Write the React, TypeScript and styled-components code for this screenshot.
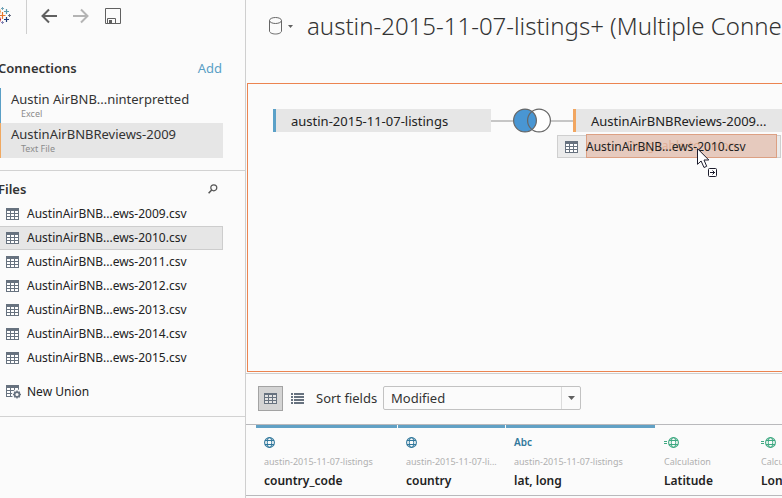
import React from "react";
import styled, { createGlobalStyle } from "styled-components";

const Global = createGlobalStyle`
  * { box-sizing: border-box; }
  body {
    margin: 0;
    background: #fbfbfb;
    color: #333;
    font-family: "Noto Sans", "Liberation Sans", sans-serif;
    font-size: 13px;
  }
  button, select, input { font: inherit; color: inherit; }
  button { border: 0; padding: 0; background: none; text-align: left; }
  h1, h2, p, ul { margin: 0; padding: 0; }
  ul { list-style: none; }
  svg { display: block; flex: none; }
`;

const Page = styled.div`
  display: grid;
  grid-template-columns: 246px minmax(0, 1fr);
  min-height: 100vh;
`;

const Sidebar = styled.aside`
  border-right: 1px solid #cfcfcf;
`;

const Toolbar = styled.div`
  display: flex;
  height: 56px;
`;

const Brand = styled.div`
  width: 27px;
  height: 34px;
  padding-top: 6px;
  border-right: 1px solid #cfcfcf;
`;

const ToolButtons = styled.div`
  display: flex;
  gap: 16px;
  padding: 8px 0 0 14px;
  height: 24px;
`;

const SectionHead = styled.div<{ $pad: number }>`
  display: flex;
  align-items: center;
  justify-content: space-between;
  height: 24px;
  padding-right: ${(p) => p.$pad}px;
`;

const SectionTitle = styled.h2`
  font-size: 13px;
  font-weight: 600;
  line-height: 24px;
  margin-left: -2px;
`;

const AddLink = styled.a`
  color: #5a9fc6;
  font-size: 13px;
  text-decoration: none;
`;

const Connections = styled.section`
  padding-bottom: 12px;
  border-bottom: 1px solid #d2d2d2;
`;

const ConnectionList = styled.ul`
  padding: 8px 22px 0 0;
`;

const Connection = styled.button<{ $accent: string; $selected?: boolean }>`
  display: flex;
  flex-direction: column;
  width: 100%;
  height: 35px;
  padding: 2px 0 0 10px;
  border-left: 1px solid ${(p) => p.$accent};
  background: ${(p) => (p.$selected ? "#e6e6e6" : "transparent")};
`;

const ConnectionName = styled.span`
  line-height: 18px;
  font-size: 13px;
  white-space: nowrap;
`;

const ConnectionKind = styled.span`
  padding-left: 10px;
  color: #8c8c8c;
  font-size: 9px;
  line-height: 12px;
`;

const Files = styled.section`
  padding: 6px 0 12px;
  border-bottom: 1px solid #d2d2d2;
`;

const FileList = styled.ul`
  padding: 1px 22px 10px 0;
`;

const FileRow = styled.button<{ $selected?: boolean }>`
  display: flex;
  align-items: center;
  gap: 8px;
  width: 100%;
  height: 24px;
  padding: 0 0 1px 6px;
  border: 1px solid ${(p) => (p.$selected ? "#cdcdcd" : "transparent")};
  border-left: 0;
  background: ${(p) => (p.$selected ? "#e6e6e6" : "transparent")};
  color: #222;
  font-size: 12px;
  white-space: nowrap;
`;

const UnionRow = styled(FileRow)`
  gap: 6px;
`;

const Main = styled.main`
  display: flex;
  flex-direction: column;
  min-width: 0;
`;

const Header = styled.header`
  display: flex;
  align-items: center;
  height: 83px;
  padding: 0 0 31px 22px;
  overflow: hidden;
`;

const SourceMenu = styled.button`
  display: flex;
  flex: none;
  align-items: center;
  gap: 5px;
  width: 39px;
`;

const Title = styled.h1`
  flex: none;
  font-size: 24px;
  font-weight: 300;
  line-height: 36px;
  white-space: nowrap;
`;

const Canvas = styled.section`
  position: relative;
  height: 289px;
  margin: 0 0 1px 1px;
  padding: 24px 0 0 25px;
  border: 1px solid #ec8450;
  border-right: 0;
  overflow: hidden;
`;

const JoinRow = styled.div`
  display: flex;
  align-items: center;
  height: 25px;
`;

const TableNode = styled.button<{ $accent: string }>`
  flex: none;
  width: 218px;
  height: 23px;
  padding-left: 15px;
  border-left: 3px solid ${(p) => p.$accent};
  background: #e6e6e6;
  color: #222;
  font-size: 13px;
  white-space: nowrap;
`;

const Wire = styled.span`
  flex: none;
  width: 22px;
  height: 2px;
  background: #c6c6c6;
`;

const DragGhost = styled.div`
  position: absolute;
  top: 51px;
  left: 309px;
  display: flex;
  align-items: center;
  gap: 8px;
  width: 224px;
  height: 23px;
  padding-left: 7px;
  border: 1px solid #cfcfcf;
  background: #ebebeb;
  color: #222;
  font-size: 12px;
  white-space: nowrap;
`;

const GhostName = styled.span`
  position: relative;
`;

const DropTarget = styled.div`
  position: absolute;
  top: -2px;
  left: 28px;
  width: 191px;
  height: 24px;
  border: 1px solid #dca083;
  background: #e6cabe;
  color: #e0af96;
  font-size: 12px;
  line-height: 22px;
  text-align: center;
`;

const Pointer = styled.div`
  position: absolute;
  top: 64px;
  left: 449px;
`;

const SortBar = styled.div`
  display: flex;
  align-items: center;
  height: 52px;
  padding: 0 0 2px 12px;
  border-top: 1px solid #cfcfcf;
  border-bottom: 1px solid #b9b9bc;
`;

const ViewButton = styled.button<{ $active?: boolean }>`
  display: flex;
  align-items: center;
  justify-content: center;
  width: 25px;
  height: 25px;
  margin-right: 2px;
  border: 1px solid ${(p) => (p.$active ? "#a3a3a3" : "transparent")};
  background: ${(p) => (p.$active ? "#d4d4d4" : "transparent")};
`;

const SortLabel = styled.label`
  width: 67px;
  margin-left: 4px;
  font-size: 13px;
  white-space: nowrap;
`;

const SelectWrap = styled.div`
  display: grid;
  grid-template-columns: 1fr 19px;
  width: 198px;
  height: 24px;
  border: 1px solid #c2c2c2;
  border-radius: 2px;
`;

const SortSelect = styled.select`
  grid-area: 1 / 1 / 2 / 3;
  appearance: none;
  padding: 0 26px 0 7px;
  border: 0;
  background: transparent;
  font-size: 13px;
`;

const SelectArrow = styled.span`
  grid-area: 1 / 2 / 2 / 3;
  display: flex;
  align-items: center;
  justify-content: center;
  border-left: 1px solid #dcdcdc;
  pointer-events: none;
`;

const FieldStrip = styled.div`
  overflow: hidden;
  border-bottom: 1px solid #b9b9bc;
`;

const FieldTable = styled.table`
  margin-left: 10px;
  width: 624px;
  table-layout: fixed;
  border-collapse: collapse;
`;

const Field = styled.th<{ $w: number }>`
  width: ${(p) => p.$w}px;
  padding: 0 1px 0 0;
  vertical-align: top;
  text-align: left;
  font-weight: 400;
`;

const FieldBody = styled.div<{ $linked?: boolean }>`
  height: 70px;
  padding: 8px 8px 0;
  border-top: 3px solid ${(p) => (p.$linked ? "#61a1c5" : "transparent")};
`;

const TypeIcon = styled.div`
  display: flex;
  align-items: center;
  height: 12px;
  color: #31789c;
  font-size: 10px;
  font-weight: 600;
`;

const FieldSource = styled.p`
  margin-top: 6px;
  color: #b0b0b0;
  font-size: 9px;
  line-height: 16px;
  overflow: hidden;
  text-overflow: ellipsis;
  white-space: nowrap;
`;

const FieldName = styled.p`
  margin-top: 1px;
  color: #222;
  font-size: 12px;
  font-weight: 600;
  line-height: 20px;
  white-space: nowrap;
`;

const TableIcon = () => (
  <svg width="13" height="12" viewBox="0 0 13 12" aria-hidden="true" shapeRendering="crispEdges">
    <path fill="#67727f" d="M0 0h13v12H0z" />
    <path
      fill="#fff"
      d="M1 3h3v2H1zM5 3h3v2H5zM9 3h3v2H9zM1 6h3v2H1zM5 6h3v2H5zM9 6h3v2H9zM1 9h3v2H1zM5 9h3v2H5zM9 9h3v2H9z"
    />
  </svg>
);

const GridIcon = () => (
  <svg width="13" height="11" viewBox="0 0 13 11" aria-hidden="true" shapeRendering="crispEdges">
    <path fill="#67727f" d="M0 0h13v11H0z" />
    <path
      fill="#e4e4e4"
      d="M1 2h3v2H1zM5 2h3v2H5zM9 2h3v2H9zM1 5h3v2H1zM5 5h3v2H5zM9 5h3v2H9zM1 8h3v2H1zM5 8h3v2H5zM9 8h3v2H9z"
    />
  </svg>
);

const ListIcon = () => (
  <svg width="13" height="11" viewBox="0 0 13 11" aria-hidden="true" shapeRendering="crispEdges">
    <path
      fill="#67727f"
      d="M0 0h2v2H0zM3 0h10v2H3zM0 3h2v2H0zM3 3h10v2H3zM0 6h2v2H0zM3 6h10v2H3zM0 9h2v2H0zM3 9h10v2H3z"
    />
  </svg>
);

const UnionIcon = () => (
  <svg width="15" height="14" viewBox="0 0 15 14" aria-hidden="true">
    <path fill="#67727f" d="M0 0h13v12H0z" shapeRendering="crispEdges" />
    <path
      fill="#fff"
      shapeRendering="crispEdges"
      d="M1 3h3v2H1zM5 3h3v2H5zM9 3h3v2H9zM1 6h3v2H1zM5 6h3v2H5zM1 9h3v2H1zM5 9h2v2H5z"
    />
    <circle cx="11" cy="9.5" r="5" fill="#fbfbfb" />
    <circle cx="11" cy="9.5" r="2.4" fill="none" stroke="#67727f" strokeWidth="1.6" />
    <path
      stroke="#67727f"
      strokeWidth="1.3"
      d="M11 5.5v2M11 11.5v2M7 9.5h2M13 9.5h2M8.2 6.7l1.3 1.3M12.5 11l1.3 1.3M8.2 12.3L9.5 11M12.5 8l1.3-1.3"
    />
  </svg>
);

const Globe = ({ color }: { color: string }) => (
  <svg width="11" height="11" viewBox="0 0 11 11" fill="none" stroke={color} aria-hidden="true">
    <circle cx="5.5" cy="5.5" r="4.9" strokeWidth="1.1" />
    <ellipse cx="5.5" cy="5.5" rx="2.2" ry="4.9" />
    <path d="M1 3.5h9M1 7.5h9" />
  </svg>
);

const CalcGlobe = () => (
  <>
    <svg width="4" height="11" viewBox="0 0 4 11" aria-hidden="true">
      <path d="M0 4h3v1H0zM0 6h3v1H0z" fill="#3fa982" />
    </svg>
    <Globe color="#3fa982" />
  </>
);

const Logo = () => (
  <svg width="11" height="18" viewBox="0 0 11 18" fill="none" aria-label="Tableau">
    <path stroke="#e8762c" strokeWidth="1.2" d="M2.5 6v7M-1 9.5h6.5" />
    <path stroke="#5b9aad" strokeWidth="1.2" d="M6.5 3v5M4 5.5h5" />
    <path stroke="#1f3b77" strokeWidth="1.2" d="M6.5 11v5M4 13.5h5" />
    <path stroke="#c72035" strokeWidth="1.2" d="M0 11.5v4M-1 13.5h2" />
    <path stroke="#e6a15c" strokeWidth="1.2" d="M0 3.5v4M-1 5.5h2" />
    <path stroke="#74a5b8" d="M2.5 1v3M1 2.5h3" />
    <path stroke="#8386b5" d="M2.5 15v3M1 16.5h3" />
    <path stroke="#6a7186" d="M9.5 8v3M8 9.5h3" />
  </svg>
);

const BackIcon = ({ color }: { color: string }) => (
  <svg width="16" height="16" viewBox="0 0 16 16" fill="none" stroke={color} strokeWidth="2" aria-hidden="true">
    <path d="M16 8H1.5M8 1.5L1.5 8L8 14.5" />
  </svg>
);

const ForwardIcon = ({ color }: { color: string }) => (
  <svg width="16" height="16" viewBox="0 0 16 16" fill="none" stroke={color} strokeWidth="2" aria-hidden="true">
    <path d="M0 8h14.5M8 1.5L14.5 8L8 14.5" />
  </svg>
);

const SaveIcon = () => (
  <svg width="16" height="16" viewBox="0 0 16 16" fill="none" stroke="#606060" aria-hidden="true">
    <path d="M.5.5h15v15H.5zM2.5 15.5v-5h8v5" />
    <path fill="#606060" stroke="none" d="M4 12h3v4H4z" />
  </svg>
);

const SearchIcon = () => (
  <svg width="10" height="10" viewBox="0 0 10 10" fill="none" stroke="#555" aria-hidden="true">
    <circle cx="5.8" cy="3.8" r="3" strokeWidth="1.2" />
    <path strokeWidth="1.5" d="M3.7 6L.6 9.3" />
  </svg>
);

const Database = () => (
  <svg width="15" height="18" viewBox="0 0 15 18" fill="none" stroke="#666" aria-hidden="true">
    <ellipse cx="7.5" cy="3.5" rx="6" ry="3" />
    <path d="M1.5 3.5v10.500c0 1.700 2.600 3 6 3s6-1.300 6-3V3.500" />
  </svg>
);

const Caret = ({ width }: { width: number }) => (
  <svg width={width} height={Math.ceil(width / 2)} viewBox="0 0 8 4" preserveAspectRatio="none" aria-hidden="true">
    <path fill="#606060" d="M0 0h8L4 4z" />
  </svg>
);

const Venn = () => (
  <svg width="38" height="25" viewBox="0 0 38 25" role="img" aria-label="Left join">
    <circle cx="26" cy="12.5" r="11.4" fill="#fff" />
    <circle cx="12" cy="12.5" r="11.4" fill="#4996d3" />
    <circle cx="12" cy="12.5" r="11.4" fill="none" stroke="#666" strokeWidth="1.2" />
    <circle cx="26" cy="12.5" r="11.4" fill="none" stroke="#666" strokeWidth="1.2" />
  </svg>
);

const Cursor = () => (
  <svg width="22" height="32" viewBox="0 0 22 32" aria-hidden="true">
    <path
      fill="#fff"
      stroke="#1c1c2c"
      d="M.5.7v15.6l3.600-3.300L7 19.500l2.700-1.200L7 12h4.800z"
    />
    <rect x="11.500" y="20.500" width="8" height="8" rx="1" fill="#fff" stroke="#1c1c2c" />
    <path fill="none" stroke="#1c1c2c" d="M13 24.500h5M15.500 22.500l2 2l-2 2" />
  </svg>
);

const years = [2009, 2010, 2011, 2012, 2013, 2014, 2015];

const fields = [
  { name: "country_code", source: "austin-2015-11-07-listings", width: 142, type: "geo", linked: true },
  { name: "country", source: "austin-2015-11-07-li...", width: 108, type: "geo", linked: true },
  { name: "lat, long", source: "austin-2015-11-07-listings", width: 150, type: "text", linked: true },
  { name: "Latitude", source: "Calculation", width: 97, type: "calc", linked: false },
  { name: "Longitude", source: "Calculation", width: 127, type: "calc", linked: false },
];

export default function App() {
  return (
    <Page>
      <Global />
      <Sidebar>
        <Toolbar>
          <Brand>
            <Logo />
          </Brand>
          <ToolButtons>
            <button aria-label="Back"><BackIcon color="#606060" /></button>
            <button aria-label="Forward"><ForwardIcon color="#b4b4b4" /></button>
            <button aria-label="Save"><SaveIcon /></button>
          </ToolButtons>
        </Toolbar>
        <Connections>
          <SectionHead $pad={23}>
            <SectionTitle>Connections</SectionTitle>
            <AddLink href="#add">Add</AddLink>
          </SectionHead>
          <ConnectionList>
            <li>
              <Connection $accent="#5a9fc6">
                <ConnectionName>Austin AirBNB...ninterpretted</ConnectionName>
                <ConnectionKind>Excel</ConnectionKind>
              </Connection>
            </li>
            <li>
              <Connection $accent="#f0a860" $selected>
                <ConnectionName>AustinAirBNBReviews-2009</ConnectionName>
                <ConnectionKind>Text File</ConnectionKind>
              </Connection>
            </li>
          </ConnectionList>
        </Connections>
        <Files>
          <SectionHead $pad={27}>
            <SectionTitle>Files</SectionTitle>
            <button aria-label="Search files"><SearchIcon /></button>
          </SectionHead>
          <FileList>
            {years.map((year) => (
              <li key={year}>
                <FileRow $selected={year === 2010}>
                  <TableIcon />
                  AustinAirBNB...ews-{year}.csv
                </FileRow>
              </li>
            ))}
          </FileList>
          <UnionRow>
            <UnionIcon />
            New Union
          </UnionRow>
        </Files>
      </Sidebar>
      <Main>
        <Header>
          <SourceMenu aria-label="Data source options">
            <Database />
            <Caret width={5} />
          </SourceMenu>
          <Title>austin-2015-11-07-listings+ (Multiple Connections)</Title>
        </Header>
        <Canvas>
          <JoinRow>
            <TableNode $accent="#5ba1c8">austin-2015-11-07-listings</TableNode>
            <Wire />
            <Venn />
            <Wire />
            <TableNode $accent="#f1a661">AustinAirBNBReviews-2009...</TableNode>
          </JoinRow>
          <DragGhost>
            <DropTarget>Drag table to union</DropTarget>
            <TableIcon />
            <GhostName>AustinAirBNB...ews-2010.csv</GhostName>
          </DragGhost>
          <Pointer>
            <Cursor />
          </Pointer>
        </Canvas>
        <SortBar>
          <ViewButton $active aria-label="Grid view"><GridIcon /></ViewButton>
          <ViewButton aria-label="List view"><ListIcon /></ViewButton>
          <SortLabel htmlFor="sort">Sort fields</SortLabel>
          <SelectWrap>
            <SortSelect id="sort" defaultValue="Modified">
              <option>Modified</option>
            </SortSelect>
            <SelectArrow><Caret width={7} /></SelectArrow>
          </SelectWrap>
        </SortBar>
        <FieldStrip>
          <FieldTable>
            <thead>
              <tr>
                {fields.map((f) => (
                  <Field key={f.name} $w={f.width} scope="col">
                    <FieldBody $linked={f.linked}>
                      <TypeIcon>
                        {f.type === "geo" && <Globe color="#31789c" />}
                        {f.type === "text" && "Abc"}
                        {f.type === "calc" && <CalcGlobe />}
                      </TypeIcon>
                      <FieldSource>{f.source}</FieldSource>
                      <FieldName>{f.name}</FieldName>
                    </FieldBody>
                  </Field>
                ))}
              </tr>
            </thead>
          </FieldTable>
        </FieldStrip>
      </Main>
    </Page>
  );
}
